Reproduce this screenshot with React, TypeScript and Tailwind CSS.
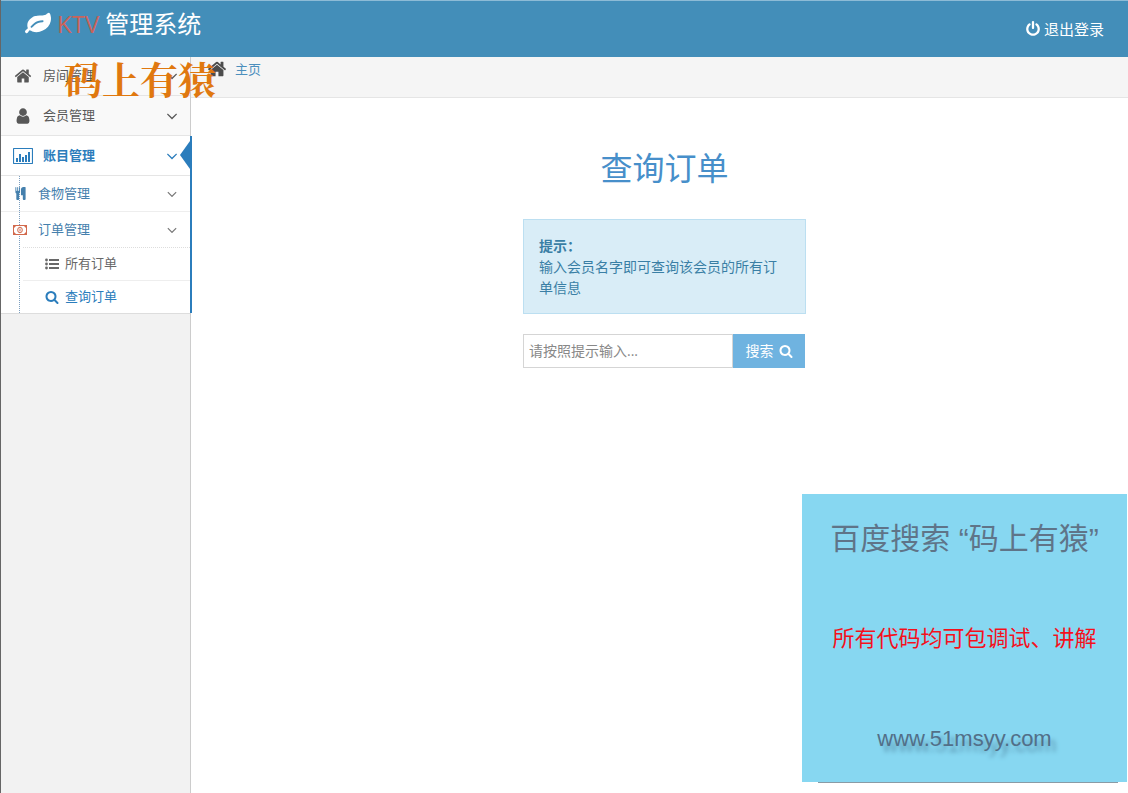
import type { ReactNode } from "react";

const paths = {
  home: "M1472 992v480q0 26-19 45t-45 19h-384v-384h-256v384h-384q-26 0-45-19t-19-45v-480q0-1 .5-3t.5-3l575-474 575 474q1 2 1 6zm223-69l-62 74q-8 9-21 11h-3q-13 0-21-7l-692-577-692 577q-12 8-24 7-13-2-21-11l-62-74q-8-10-7-23.5t11-21.5l719-599q32-26 76-26t76 26l244 204v-195q0-14 9-23t23-9h192q14 0 23 9t9 23v408l219 182q10 8 11 21.5t-7 23.5z",
  user: "M1536 1399q0 109-62.5 187t-150.5 78h-854q-88 0-150.5-78t-62.5-187q0-85 8.5-160.5t31.5-152 58.5-131 94-89 134.5-34.5q131 128 313 128t313-128q76 0 134.5 34.5t94 89 58.5 131 31.5 152 8.5 160.5zm-256-887q0 159-112.5 271.5t-271.5 112.5-271.5-112.5-112.5-271.5 112.5-271.5 271.5-112.5 271.5 112.5 112.5 271.5z",
  search: "M1216 832q0-185-131.5-316.5t-316.5-131.5-316.5 131.5-131.5 316.5 131.5 316.5 316.5 131.5 316.5-131.5 131.5-316.5zm512 832q0 52-38 90t-90 38q-54 0-90-38l-343-342q-179 124-399 124-143 0-273.5-55.5t-225-150-150-225-55.5-273.5 55.5-273.5 150-225 225-150 273.5-55.5 273.5 55.5 225 150 150 225 55.5 273.5q0 220-124 399l343 343q37 37 37 90z",
  power: "M1664 896q0 156-61 298t-164 245-245 164-298 61-298-61-245-164-164-245-61-298q0-182 80.5-343t226.5-270q43-32 95.5-25t83.5 50q32 42 24.5 94.5t-49.5 84.5q-98 74-151.5 181t-53.5 228q0 104 40.5 198.5t109.5 163.5 163.5 109.5 198.5 40.5 198.5-40.5 163.5-109.5 109.5-163.5 40.5-198.5q0-121-53.5-228t-151.5-181q-42-32-49.5-84.5t24.5-94.5q31-43 84-50t95 25q146 109 226.5 270t80.5 343zm-640-768v640q0 52-38 90t-90 38-90-38-38-90v-640q0-52 38-90t90-38 90 38 38 90z",
  leaf: "M1280 704q0-26-19-45t-45-19q-172 0-318 49.5t-259.5 134-235.5 219.5q-19 21-19 45 0 26 19 45t45 19q24 0 45-19 27-24 74-71t67-66q137-124 268.5-176t313.5-52q26 0 45-19t19-45zm512-198q0 95-20 193-46 224-184.5 383t-357.5 268q-214 108-438 108-148 0-286-47-15-5-88-42t-96-37q-16 0-39.5 32t-45 70-52.5 70-60 32q-43 0-63.5-17.5t-45.5-59.5q-2-4-6-11t-5.5-10-3-9.5-1.5-13.5q0-35 31-73.5t68-65.5 68-56 31-48q0-4-14-38t-16-44q-9-51-9-104 0-115 43.5-220t119-184.5 170.5-139 204-95.5q55-18 145-25.5t179.5-9 178.5-6 163.5-24 113.5-56.5l29.5-29.5 29.5-28 27-20 36.5-16 43.5-4.5q39 0 70.5 46t47.5 112 24 124 8 96z",
  food: "M832 64v640q0 61-35.5 111t-92.5 70v779q0 52-38 90t-90 38h-128q-52 0-90-38t-38-90v-779q-57-20-92.5-70t-35.5-111v-640q0-26 19-45t45-19 45 19 19 45v416q0 26 19 45t45 19 45-19 19-45v-416q0-26 19-45t45-19 45 19 19 45v416q0 26 19 45t45 19 45-19 19-45v-416q0-26 19-45t45-19 45 19 19 45zm768 0v1600q0 52-38 90t-90 38h-128q-52 0-90-38t-38-90v-512h-224q-13 0-22.5-9.5t-9.5-22.5v-800q0-132 94-226t226-94h256q26 0 45 19t19 45z",
  down: "M1395 736q0 13-10 23l-466 466q-10 10-23 10t-23-10l-466-466q-10-10-10-23t10-23l50-50q10-10 23-10t23 10l393 393 393-393q10-10 23-10t23 10l50 50q10 10 10 23z",
};

function Icon({ name, className }: { name: keyof typeof paths; className: string }) {
  return (
    <svg viewBox="0 0 1792 1792" fill="currentColor" aria-hidden="true" className={`shrink-0 ${className}`}>
      <path d={paths[name]} />
    </svg>
  );
}

function ChartIcon() {
  return (
    <svg viewBox="0 0 20 16" aria-hidden="true" className="h-4 w-5 shrink-0">
      <rect x="0.5" y="0.5" width="19" height="15" rx="0.6" fill="none" stroke="currentColor" strokeWidth="1.2" />
      <path fill="currentColor" d="M3 10h2v4H3zM6 6h2v8H6zM9 9h2v5H9zM12 7h2v7h-2zM15 4h2v10h-2z" />
    </svg>
  );
}

function MoneyIcon() {
  return (
    <svg viewBox="0 0 14 10" aria-hidden="true" className="h-[10px] w-[14px] shrink-0 bg-white text-[#d2694c]">
      <rect x="0.5" y="0.5" width="13" height="9" fill="none" stroke="currentColor" strokeWidth="1" />
      <path fill="currentColor" d="M1 1h2L1 3zM13 1v2L11 1zM1 9V7l2 2zM13 9h-2l2-2z" />
      <ellipse cx="7" cy="5" rx="2.300" ry="2.800" fill="none" stroke="currentColor" strokeWidth="1" />
      <path fill="currentColor" d="M6.500 3.500h1v3h-1z" />
    </svg>
  );
}

function ListIcon() {
  return (
    <svg viewBox="0 0 14 12" fill="currentColor" aria-hidden="true" className="h-3 w-[14px] shrink-0">
      <circle cx="1.500" cy="2" r="1.400" />
      <circle cx="1.500" cy="6" r="1.400" />
      <circle cx="1.500" cy="10" r="1.400" />
      <path d="M4 1h10v2H4zM4 5h10v2H4zM4 9h10v2H4z" />
    </svg>
  );
}

function TopItem({ icon, label, className }: { icon: ReactNode; label: string; className: string }) {
  return (
    <a href="#" className={`flex items-center border-b border-[#e5e5e5] pr-[9px] pl-3 ${className}`}>
      <span className="flex w-5 justify-center">{icon}</span>
      <span className="ml-[10px] flex-1">{label}</span>
      <Icon name="down" className="h-[18px] w-[18px]" />
    </a>
  );
}

function SubItem({ icon, label }: { icon: ReactNode; label: string }) {
  return (
    <a href="#" className="flex h-[35px] items-center pr-[10px] pl-3 text-[#4580ad]">
      <span className="z-10 flex w-[14px] justify-center">{icon}</span>
      <span className="ml-[11px] flex-1">{label}</span>
      <Icon name="down" className="h-4 w-4 text-[#777]" />
    </a>
  );
}

export default function App() {
  return (
    <div className="relative flex min-h-screen flex-col border-l border-[#666] bg-white font-['Open_Sans','Noto_Sans_CJK_SC',sans-serif] text-[13px]">
      <header className="flex h-[57px] justify-between border-t border-[#8dbbd6] bg-[#438eb9] pr-6 pl-6 text-white">
        <h1 className="flex h-[46px] items-center text-2xl">
          <Icon name="leaf" className="mr-[6px] h-[26px] w-[26px]" />
          <span className="mr-[6px] text-[#c9635a]">KTV</span>
          <span>管理系统</span>
        </h1>
        <a href="#" className="flex items-center gap-[3px] text-[15px]">
          <Icon name="power" className="h-4 w-4" />
          退出登录
        </a>
      </header>

      <div className="flex flex-1">
        <aside className="w-[190px] shrink-0 border-r border-[#ccc] bg-[#f2f2f2]">
          <nav>
            <TopItem icon={<Icon name="home" className="h-[18px] w-[18px]" />} label="房间管理" className="h-[39px] bg-[#f9f9f9] text-[#585858]" />
            <TopItem icon={<Icon name="user" className="h-[18px] w-[18px]" />} label="会员管理" className="h-10 bg-[#f9f9f9] text-[#585858]" />
            <div className="relative border-b border-[#ddd] bg-white">
              <TopItem icon={<ChartIcon />} label="账目管理" className="h-10 font-bold text-[#2b7dbc]" />
              <svg viewBox="0 0 10 28" aria-hidden="true" className="absolute top-[5px] right-0 h-7 w-[10px]">
                <path d="M10 0v28L0 14z" fill="#2b7dbc" />
              </svg>
              <span className="absolute inset-y-0 -right-[2px] w-[2px] bg-[#2b7dbc]" />
              <div className="relative">
                <span className="absolute inset-y-0 left-[18px] border-l border-dotted border-[#7c9fc0]" />
                <SubItem icon={<Icon name="food" className="h-[13px] w-[13px]" />} label="食物管理" />
                <div className="border-t border-[#eee]">
                  <SubItem icon={<MoneyIcon />} label="订单管理" />
                </div>
                <div className="pl-[22px]">
                  <a href="#" className="flex h-[33px] items-center border-t border-dotted border-[#ddd] pl-[22px] text-[#686868]">
                    <ListIcon />
                    <span className="ml-[6px]">所有订单</span>
                  </a>
                  <a href="#" className="flex h-[33px] items-center border-t border-[#eee] pl-[22px] text-[#2b7dbc]">
                    <Icon name="search" className="h-[14px] w-[14px]" />
                    <span className="ml-[6px]">查询订单</span>
                  </a>
                </div>
              </div>
            </div>
          </nav>
        </aside>

        <main className="min-w-0 flex-1">
          <div className="flex h-[41px] items-start border-b border-[#e5e5e5] bg-[#f5f5f5] pt-[2px] pl-4">
            <Icon name="home" className="h-5 w-5 text-[#4c4c4c]" />
            <a href="#" className="ml-2 leading-5 text-[#4c8fbd]">主页</a>
          </div>
          <div className="flex flex-col items-center pt-[46px] pl-[10px]">
            <h2 className="text-[32px] leading-[48px] text-[#478fca]">查询订单</h2>
            <div className="mt-[27px] flex w-[283px] flex-col gap-5">
              <div className="border border-[#bcdff1] bg-[#d9edf7] p-[15px] text-sm leading-[21px] text-[#3a7fa5]">
                <strong className="block">提示：</strong>
                <p>输入会员名字即可查询该会员的所有订单信息</p>
              </div>
              <form className="flex h-[34px] pr-px" onSubmit={(e) => e.preventDefault()}>
                <input
                  type="text"
                  aria-label="会员名字"
                  placeholder="请按照提示输入..."
                  className="min-w-0 flex-1 border border-[#d5d5d5] bg-white px-[5px] text-sm outline-none placeholder:text-[#888]"
                />
                <button type="submit" className="flex w-[72px] items-center justify-center gap-[5px] bg-[#6fb3e0] text-sm text-white">
                  搜索
                  <Icon name="search" className="h-[14px] w-[14px]" />
                </button>
              </form>
            </div>
          </div>
        </main>
      </div>

      <div className="pointer-events-none absolute top-[54px] left-[63px] font-['Noto_Serif_CJK_SC','Noto_Sans_CJK_SC',serif] text-[38px] leading-[48px] font-bold whitespace-nowrap text-[#e0780f]">
        码上有猿
      </div>

      <section className="fixed right-px bottom-[10px] flex w-[325px] flex-col items-center whitespace-nowrap">
        <div className="flex h-72 w-full flex-col items-center bg-[#87d7f1] pt-[21px]">
          <p className="font-['Liberation_Sans','Noto_Sans_CJK_SC',sans-serif] text-[30px] leading-[48px] text-[#5f7488]">百度搜索 “码上有猿”</p>
          <p className="mt-[58px] text-[22px] leading-8 text-[#f5101c]">所有代码均可包调试、讲解</p>
          <a href="#" className="mt-[66px] font-['Liberation_Sans',sans-serif] text-[22px] leading-10 text-[#526f88] [text-shadow:5px_6px_4px_#5f9db8]">www.51msyy.com</a>
        </div>
        <div className="ml-[6px] h-px w-[300px] bg-[#8a9ba5]" />
      </section>
    </div>
  );
}
